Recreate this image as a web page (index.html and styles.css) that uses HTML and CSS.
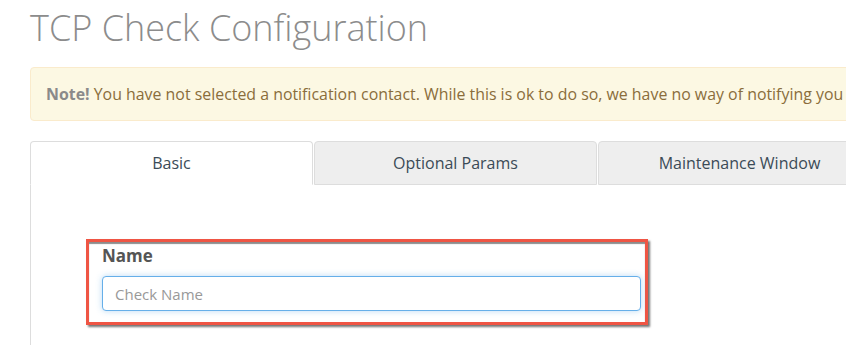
FILE: index.html
```html
<!DOCTYPE html>
<html lang="en">
<head>
  <meta charset="UTF-8" />
  <title>TCP Check Configuration</title>
  <link rel="stylesheet" href="styles.css">
</head>
<body>
  <div class="page">
    <h1 class="title">TCP Check Configuration</h1>

    <div class="alert">
      <strong>Note!</strong> You have not selected a notification contact. While this is ok to do so, we have no way of notifying you
    </div>

    <ul class="tabs">
      <li class="tab active">Basic</li>
      <li class="tab">Optional Params</li>
      <li class="tab">Maintenance Window</li>
    </ul>

    <div class="tab-content">
      <div class="highlight">
        <label class="field-label" for="check-name">Name</label>
        <input id="check-name" class="field-input" type="text" placeholder="Check Name">
      </div>
    </div>
  </div>
</body>
</html>
```

FILE: styles.css
```css
html, body {
  margin: 0;
  padding: 0;
  overflow: hidden;
  height: 100%;
  background: #fff;
  font-family: 'Open Sans', 'Noto Sans', sans-serif;
}

.page {
  width: 1100px;
  padding-left: 30px;
}

.title {
  margin: 0;
  padding-top: 6px;
  font-size: 36px;
  font-weight: 300;
  line-height: 44px;
  color: #8c8c8c;
}

.alert {
  margin-top: 17px;
  padding: 17px 15px;
  background: #fcf8e3;
  border: 1px solid #faebcc;
  border-radius: 4px;
  color: #8a6d3b;
  font-size: 15.9px;
  line-height: 18px;
  white-space: nowrap;
}

.alert strong {
  color: #8a8a8a;
}

.tabs {
  display: flex;
  gap: 1px;
  margin: 20px 0 0;
  padding: 0;
  list-style: none;
}

.tab {
  box-sizing: border-box;
  width: 283px;
  height: 44px;
  line-height: 42px;
  text-align: center;
  font-size: 16px;
  color: #3b4b57;
  background: #eeeeee;
  border: 1px solid #dddddd;
  border-radius: 4px 4px 0 0;
}

.tab.active {
  background: #fff;
  border-bottom-color: #fff;
}

.tab-content {
  border-left: 1px solid #dddddd;
  margin-top: -1px;
  padding: 55px 0 30px 55px;
}

.highlight {
  width: 538px;
  padding: 4px 5px 11px 13px;
  border: 3px solid #ef5544;
  box-shadow: 2px 2px 2px rgba(0, 0, 0, 0.55), inset 0 2px 1px rgba(0, 0, 0, 0.45);
}

.field-label {
  display: block;
  font-size: 17px;
  font-weight: 700;
  color: #555;
  line-height: 20px;
  margin-bottom: 10px;
}

.field-input {
  box-sizing: border-box;
  width: 539px;
  height: 35px;
  padding: 0 12px;
  font-family: 'Open Sans', 'Noto Sans', sans-serif;
  font-size: 15px;
  color: #555;
  border: 1px solid #66afe9;
  border-radius: 4px;
  box-shadow: 0 0 6px rgba(102, 175, 233, 0.45);
  outline: none;
}

.field-input::placeholder {
  color: #999;
}
```
